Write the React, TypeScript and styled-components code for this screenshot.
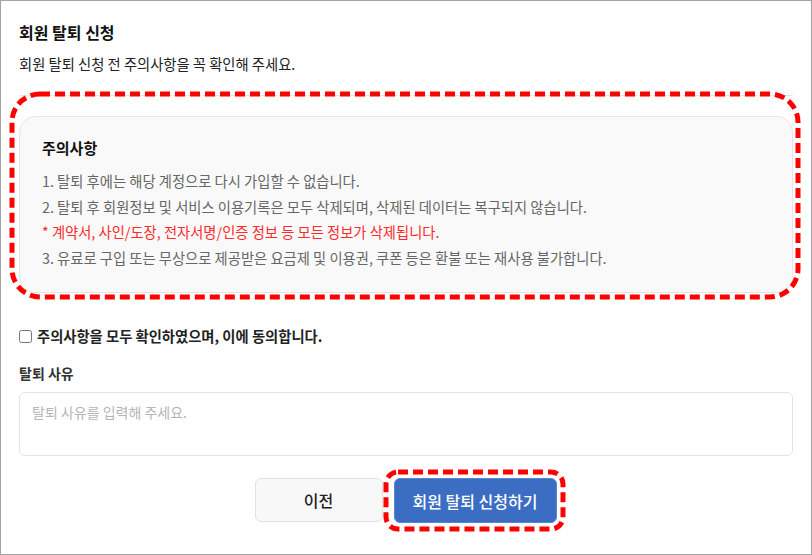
import React from "react";
import styled, { createGlobalStyle } from "styled-components";

const GlobalStyle = createGlobalStyle`
    html, body {
        margin: 0;
        padding: 0;
        background: #fff;
    }
    body {
        font-family: "Noto Sans CJK KR", "Noto Sans", sans-serif;
    }
    * {
        box-sizing: border-box;
    }
`;

// red dashed highlight drawn over a block
const Annotation: React.FC<{ inset: string; radius: number }> = ({ inset, radius }) => (
    <Mark style={{ inset }}>
        <svg width="100%" height="100%">
            <rect width="100%" height="100%" rx={radius} ry={radius} />
        </svg>
    </Mark>
);

const App: React.FC = () => {
    return (
        <Page>
            <GlobalStyle />
            <Title>회원 탈퇴 신청</Title>
            <Subtitle>회원 탈퇴 신청 전 주의사항을 꼭 확인해 주세요.</Subtitle>
            <Divider />

            <Highlight>
                <NoticeBox>
                    <NoticeTitle>주의사항</NoticeTitle>
                    <NoticeList>
                        <li>1. 탈퇴 후에는 해당 계정으로 다시 가입할 수 없습니다.</li>
                        <li>2. 탈퇴 후 회원정보 및 서비스 이용기록은 모두 삭제되며, 삭제된 데이터는 복구되지 않습니다.</li>
                        <Warning>* 계약서, 사인/도장, 전자서명/인증 정보 등 모든 정보가 삭제됩니다.</Warning>
                        <li>3. 유료로 구입 또는 무상으로 제공받은 요금제 및 이용권, 쿠폰 등은 환불 또는 재사용 불가합니다.</li>
                    </NoticeList>
                </NoticeBox>
                <Annotation inset="-2px -6px -4px -7px" radius={28} />
            </Highlight>

            <AgreeRow>
                <input type="checkbox" />
                <span>주의사항을 모두 확인하였으며, 이에 동의합니다.</span>
            </AgreeRow>

            <FieldLabel>탈퇴 사유</FieldLabel>
            <ReasonInput placeholder="탈퇴 사유를 입력해 주세요." />

            <ButtonRow>
                <PrevButton>이전</PrevButton>
                <Highlight>
                    <SubmitButton>회원 탈퇴 신청하기</SubmitButton>
                    <Annotation inset="-6px -6px -6px -8px" radius={12} />
                </Highlight>
            </ButtonRow>
        </Page>
    );
};

export default App;

const Page = styled.div`
    width: 812px;
    height: 555px;
    overflow: hidden;
    border: 1px solid #a3a3a3;
    padding: 19px 19px 0 18px;
    display: flex;
    flex-direction: column;
`;

const Title = styled.h1`
    margin: 0;
    font-size: 16px;
    font-weight: 700;
    line-height: 24px;
    color: #111;
`;

const Subtitle = styled.p`
    margin: 9px 0 0;
    font-size: 14.3px;
    line-height: 22px;
    color: #222;
`;

const Divider = styled.hr`
    margin: 20px 0 0;
    border: none;
    border-top: 1px solid #e6e6e6;
    width: 774px;
`;

const Highlight = styled.div`
    position: relative;
`;

const Mark = styled.div`
    position: absolute;
    pointer-events: none;

    svg {
        display: block;
        overflow: visible;
    }

    rect {
        fill: none;
        stroke: #ff0000;
        stroke-width: 5;
        stroke-dasharray: 10 5;
    }
`;

const NoticeBox = styled.div`
    margin-top: 20px;
    width: 774px;
    height: 177px;
    background: #f9f9f9;
    border: 1px solid #e6e6e6;
    border-radius: 16px;
    padding: 20px 22px;
`;

const NoticeTitle = styled.h2`
    margin: 0;
    font-size: 15px;
    font-weight: 700;
    line-height: 22px;
    color: #111;
`;

const NoticeList = styled.ul`
    list-style: none;
    margin: 9px 0 0;
    padding: 0;
    font-size: 14.3px;
    line-height: 25.7px;
    color: #666;
`;

const Warning = styled.li`
    color: #ff2a2a;
`;

const AgreeRow = styled.label`
    margin-top: 33px;
    display: flex;
    align-items: center;
    gap: 5px;
    font-size: 14.3px;
    font-weight: 700;
    line-height: 20px;
    color: #222;

    input {
        margin: 0;
        width: 13px;
        height: 13px;
    }
`;

const FieldLabel = styled.div`
    margin-top: 17px;
    font-size: 14px;
    font-weight: 600;
    line-height: 20px;
    color: #333;
`;

const ReasonInput = styled.textarea`
    margin-top: 9px;
    width: 774px;
    height: 64px;
    resize: none;
    border: 1px solid #e3e3e3;
    border-radius: 6px;
    padding: 9px 12px;
    font-family: inherit;
    font-size: 14px;
    line-height: 20px;
    outline: none;

    &::placeholder {
        color: #b5b5b5;
    }
`;

const ButtonRow = styled.div`
    margin-top: 22px;
    display: flex;
    justify-content: center;
    gap: 11px;
`;

const PrevButton = styled.button`
    width: 128px;
    height: 44px;
    background: #f8f8f8;
    border: 1px solid #e2e2e2;
    border-radius: 6px;
    font-family: inherit;
    font-size: 16px;
    font-weight: 500;
    color: #222;
    cursor: pointer;
`;

const SubmitButton = styled.button`
    display: block;
    width: 163px;
    height: 45px;
    background: #3b6ec2;
    border: 1px solid #5a86d0;
    border-radius: 6px;
    font-family: inherit;
    font-size: 16px;
    font-weight: 500;
    color: #fff;
    cursor: pointer;
`;
